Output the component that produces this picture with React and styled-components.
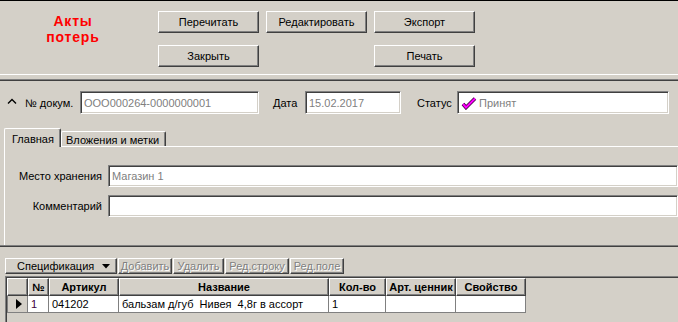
import React from "react";
import styled, { createGlobalStyle } from "styled-components";

// Акты потерь — форма документа (классический Windows-вид)

const GlobalStyle = createGlobalStyle`
  body {
    margin: 0;
    background: #d4d0c8;
    font-family: "Liberation Sans", Arial, sans-serif;
    font-size: 11px;
    color: #000;
  }
`;

const Window = styled.div`
  width: 678px;
  height: 322px;
  overflow: hidden;
  background: #d4d0c8;
  border-top: 1px solid #000;
  box-sizing: border-box;
`;

const Header = styled.div`
  display: flex;
  height: 74px;
  padding-top: 10px;
  box-sizing: border-box;
  border-bottom: 1px solid #fff;
`;

const Title = styled.div`
  width: 146px;
  padding-top: 2px;
  text-align: center;
  color: #ff0000;
  font-size: 14px;
  font-weight: bold;
  line-height: 16px;
  letter-spacing: 0.8px;
`;

const ButtonGrid = styled.div`
  display: grid;
  grid-template-columns: 101px 101px 101px;
  grid-auto-rows: 22px;
  column-gap: 7px;
  row-gap: 12px;
  margin-left: 12px;
`;

const Button = styled.div`
  grid-column: ${(p) => p.col};
  grid-row: ${(p) => p.row};
  display: flex;
  align-items: center;
  justify-content: center;
  box-sizing: border-box;
  border: 1px solid;
  border-color: #fff #404040 #404040 #fff;
  box-shadow: inset -1px -1px #808080;
  font-size: 11px;
`;

const Separator = styled.div`
  margin-top: 4px;
  height: 0;
  border-top: 1px solid #808080;
  border-bottom: 1px solid #404040;
`;

const DocRow = styled.div`
  display: flex;
  align-items: center;
  margin-top: 10px;
  padding-left: 7px;
  height: 23px;
`;

const Chevron = styled.svg`
  width: 10px;
  height: 8px;
  margin-right: 8px;
  margin-top: -3px;
`;

const Label = styled.span`
  width: ${(p) => p.w}px;
  margin-left: ${(p) => p.ml || 0}px;
  flex-shrink: 0;
  text-align: ${(p) => (p.right ? "right" : "left")};
  padding-right: ${(p) => (p.right ? 6 : 0)}px;
  box-sizing: border-box;
  white-space: nowrap;
`;

const Input = styled.div`
  display: flex;
  align-items: center;
  gap: 2px;
  width: ${(p) => (p.w ? `${p.w}px` : "auto")};
  flex: ${(p) => (p.w ? "none" : "1")};
  height: ${(p) => p.h || 23}px;
  box-sizing: border-box;
  padding-left: 3px;
  background: #fff;
  color: #808080;
  border: 1px solid;
  border-color: #808080 #fff #fff #808080;
  box-shadow: inset 1px 1px #404040, inset -1px -1px #d4d0c8;
  white-space: nowrap;
  overflow: hidden;
`;

const TabStrip = styled.div`
  display: flex;
  align-items: flex-end;
  margin-top: 14px;
  padding-left: 4px;
  height: 18px;
`;

const Tab = styled.div`
  position: relative;
  z-index: ${(p) => (p.active ? 1 : 0)};
  width: ${(p) => p.w}px;
  height: ${(p) => (p.active ? 19 : 15)}px;
  margin-bottom: ${(p) => (p.active ? -1 : 0)}px;
  box-sizing: border-box;
  padding: ${(p) => (p.active ? "4px 0 0 7px" : "2px 0 0 4px")};
  background: #d4d0c8;
  border-top: 1px solid #fff;
  border-left: 1px solid #fff;
  border-right: 1px solid #404040;
  box-shadow: inset -1px 0 #808080;
  border-top-left-radius: 2px;
  border-top-right-radius: 2px;
  white-space: nowrap;
`;

const TabPanel = styled.div`
  margin-left: 4px;
  border-top: 1px solid #fff;
  border-left: 1px solid #fff;
  padding: 18px 0 28px;
  display: flex;
  flex-direction: column;
  gap: 8px;
`;

const PanelRow = styled.div`
  display: flex;
  align-items: center;
`;

const PanelBottom = styled.div`
  height: 0;
  border-top: 1px solid #808080;
  border-bottom: 1px solid #404040;
`;

const Toolbar = styled.div`
  display: flex;
  gap: 1px;
  margin-top: 11px;
  padding-left: 5px;
  height: 16px;
`;

const ToolButton = styled.div`
  display: flex;
  align-items: center;
  justify-content: ${(p) => (p.menu ? "space-between" : "center")};
  width: ${(p) => p.w}px;
  box-sizing: border-box;
  padding: ${(p) => (p.menu ? "0 6px 0 11px" : "0")};
  border: 1px solid;
  border-color: #fff #404040 #404040 #fff;
  box-shadow: inset -1px -1px #808080;
  color: ${(p) => (p.disabled ? "#808080" : "#000")};
  text-shadow: ${(p) => (p.disabled ? "1px 1px #fff" : "none")};
  white-space: nowrap;
`;

const Grid = styled.div`
  margin-top: 2px;
  margin-left: 5px;
  height: 60px;
  border-top: 1px solid #808080;
  border-left: 1px solid #808080;
  box-shadow: inset 1px 1px #404040;
  padding: 1px 0 0 1px;
  display: grid;
  grid-template-columns: 21px 21px 70px 210px 57px 70px 70px;
  grid-template-rows: 18px 17px;
  align-content: start;
`;

const HeadCell = styled.div`
  display: flex;
  align-items: center;
  justify-content: center;
  box-sizing: border-box;
  border: 1px solid;
  border-color: #fff #404040 #404040 #fff;
  box-shadow: inset -1px -1px #808080;
  font-weight: bold;
  white-space: nowrap;
  overflow: hidden;
`;

const Cell = styled.div`
  display: flex;
  align-items: center;
  box-sizing: border-box;
  padding-left: 3px;
  background: ${(p) => (p.indicator ? "#d4d0c8" : "#fff")};
  border-right: 1px solid #808080;
  border-bottom: 1px solid #808080;
  border-left: ${(p) => (p.indicator ? "1px solid #808080" : "none")};
  color: ${(p) => p.color || "#000"};
  white-space: pre;
  overflow: hidden;
`;

const columns = ["", "№", "Артикул", "Название", "Кол-во", "Арт. ценник", "Свойство"];
const row = ["1", "041202", "бальзам д/губ  Нивея  4,8г в ассорт", "1", "", ""];

export default function App() {
  return (
    <Window>
      <GlobalStyle />
      <Header>
        <Title>
          Акты
          <br />
          потерь
        </Title>
        <ButtonGrid>
          <Button col={1} row={1}>Перечитать</Button>
          <Button col={2} row={1}>Редактировать</Button>
          <Button col={3} row={1}>Экспорт</Button>
          <Button col={1} row={2}>Закрыть</Button>
          <Button col={3} row={2}>Печать</Button>
        </ButtonGrid>
      </Header>
      <Separator />

      <DocRow>
        <Chevron viewBox="0 0 10 8">
          <polyline points="1,6.5 5,2.5 9,6.5" fill="none" stroke="#000" strokeWidth="1.4" />
        </Chevron>
        <Label w={55}>№ докум.</Label>
        <Input w={179}>ООО000264-0000000001</Input>
        <Label w={32} ml={14}>Дата</Label>
        <Input w={96}>15.02.2017</Input>
        <Label w={40} ml={16}>Статус</Label>
        <Input w={212}>
          <svg width="16" height="14" viewBox="0 0 16 14">
            <polyline points="2,8 5,11.5 14,2.5" fill="none" stroke="#400040" strokeWidth="3.6" strokeLinejoin="miter" />
            <polyline points="2,8 5,11.5 14,2.5" fill="none" stroke="#ff00ff" strokeWidth="2" />
          </svg>
          Принят
        </Input>
      </DocRow>

      <TabStrip>
        <Tab active w={57}>Главная</Tab>
        <Tab w={105}>Вложения и метки</Tab>
      </TabStrip>
      <TabPanel>
        <PanelRow>
          <Label w={103} right>Место хранения</Label>
          <Input h={22}>Магазин 1</Input>
        </PanelRow>
        <PanelRow>
          <Label w={103} right>Комментарий</Label>
          <Input h={22} />
        </PanelRow>
      </TabPanel>
      <PanelBottom />

      <Toolbar>
        <ToolButton menu w={112}>
          Спецификация
          <svg width="8" height="5" viewBox="0 0 8 5">
            <polygon points="0,0 8,0 4,4.5" fill="#000" />
          </svg>
        </ToolButton>
        <ToolButton disabled w={54}>Добавить</ToolButton>
        <ToolButton disabled w={51}>Удалить</ToolButton>
        <ToolButton disabled w={64}>Ред.строку</ToolButton>
        <ToolButton disabled w={54}>Ред.поле</ToolButton>
      </Toolbar>

      <Grid>
        {columns.map((c, i) => (
          <HeadCell key={i}>{c}</HeadCell>
        ))}
        <Cell indicator>
          <svg width="8" height="10" viewBox="0 0 8 10" style={{ marginLeft: 4 }}>
            <polygon points="1,0 7,5 1,10" fill="#000" />
          </svg>
        </Cell>
        {row.map((v, i) => (
          <Cell key={i} color={i === 0 ? "#400040" : "#000"}>
            {v}
          </Cell>
        ))}
      </Grid>
    </Window>
  );
}
